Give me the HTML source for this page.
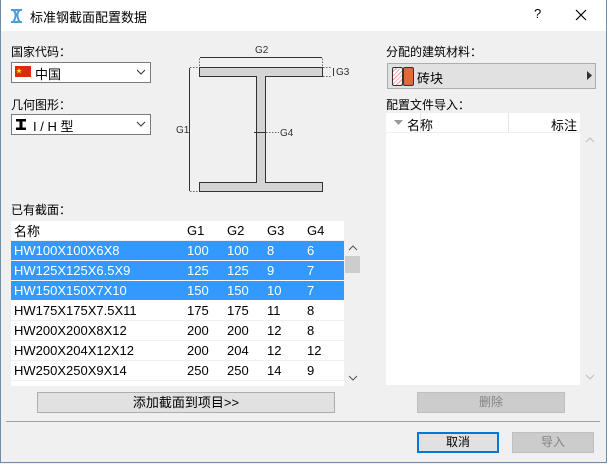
<!DOCTYPE html>
<html><head><meta charset="utf-8"><style>
body{margin:0;width:607px;height:464px;overflow:hidden;background:#f0f0f0;font-family:"Liberation Sans","Noto Sans CJK SC",sans-serif;font-size:12px;color:#000;position:relative}
.a{position:absolute}
.win{left:0;top:0;width:605px;height:462px;border:1px solid #6f8ca8;border-top:none}
.title{left:1px;top:0;width:605px;height:31px;background:#fff}
.dd{background:#fff;border:1px solid #7a7a7a;box-sizing:border-box;height:21px}
.btn{border:1px solid #adadad;background:#e1e1e1;box-sizing:border-box;text-align:center;line-height:19px}
table{border-collapse:collapse}
td{height:19px;padding:0 0 0 3px;font-size:13px;border-bottom:1px solid #f0f0f0;white-space:nowrap}
tr.s td{background:#3399ff;color:#fff;border-bottom:1px solid #fff}
</style></head><body>
<div class="a win"></div>
<div class="a title"></div>
<svg class="a" style="left:9px;top:8px" width="16" height="16"><path d="M2 2h11M2 14h11M4 2q3 2 2.5 6t-2.5 6M11 2q-3 2-2.5 6t2.5 6" stroke="#4a9fd8" stroke-width="2" fill="none"/></svg>
<div class="a" style="left:30px;top:7px;font-size:13px">标准钢截面配置数据</div>
<div class="a" style="left:534px;top:6px;font-size:13px">?</div>
<svg class="a" style="left:575px;top:9px" width="12" height="12"><path d="M1 1L11 11M11 1L1 11" stroke="#000" stroke-width="1.2"/></svg>

<div class="a" style="left:11px;top:43px">国家代码：</div>
<div class="a dd" style="left:11px;top:62px;width:140px"></div>
<div class="a" style="left:15px;top:66px;width:16px;height:11px;background:#de2910"></div>
<div class="a" style="left:16px;top:66px;color:#ff0;font-size:6px">★</div>
<div class="a" style="left:35px;top:64px;font-size:13px">中国</div>
<svg class="a" style="left:136px;top:69px" width="10" height="7"><path d="M1 1l4 4 4-4" stroke="#333" fill="none"/></svg>
<div class="a" style="left:11px;top:96px">几何图形：</div>
<div class="a dd" style="left:11px;top:114px;width:140px"></div>
<svg class="a" style="left:16px;top:119px" width="10" height="11"><path d="M0 0h10v2.5h-3.5v6h3.5v2.5h-10v-2.5h3.5v-6h-3.5z" fill="#000"/></svg>
<div class="a" style="left:33px;top:116px;font-size:13px">I / H 型</div>
<svg class="a" style="left:136px;top:121px" width="10" height="7"><path d="M1 1l4 4 4-4" stroke="#333" fill="none"/></svg>

<svg class="a" style="left:170px;top:40px" width="190" height="160">
<path d="M29.5 27.5H152.5V36.5H95.5V142.5H152.5V151.5H29.5V142.5H86.5V36.5H29.5Z" fill="#d4d4d4" stroke="#333"/>
<path d="M29.5 26V17M152.5 26V17M20 27.5h8M20 151.5h8M153 27.5h9M153 36.5h9M96 92.5h13" stroke="#666" stroke-dasharray="1.5 1.5" fill="none"/>
<path d="M30 17.5h122M19.5 28v123M163.5 28v8M84 92.5h11" stroke="#333" fill="none"/>
<text x="85" y="13" font-size="10" font-family="Liberation Sans" fill="#333">G2</text>
<text x="166" y="35" font-size="10" font-family="Liberation Sans" fill="#333">G3</text>
<text x="6" y="93" font-size="10" font-family="Liberation Sans" fill="#333">G1</text>
<text x="110" y="96" font-size="10" font-family="Liberation Sans" fill="#333">G4</text>
</svg>

<div class="a" style="left:11px;top:201px">已有截面：</div>
<div class="a" style="left:11px;top:221px;width:333px;height:165px;background:#fff;overflow:hidden">
<table style="width:333px">
<tr><td style="width:170px">名称</td><td style="width:37px">G1</td><td style="width:37px">G2</td><td style="width:37px">G3</td><td>G4</td></tr>
<tr class="s"><td>HW100X100X6X8</td><td>100</td><td>100</td><td>8</td><td>6</td></tr>
<tr class="s"><td>HW125X125X6.5X9</td><td>125</td><td>125</td><td>9</td><td>7</td></tr>
<tr class="s"><td>HW150X150X7X10</td><td>150</td><td>150</td><td>10</td><td>7</td></tr>
<tr><td>HW175X175X7.5X11</td><td>175</td><td>175</td><td>11</td><td>8</td></tr>
<tr><td>HW200X200X8X12</td><td>200</td><td>200</td><td>12</td><td>8</td></tr>
<tr><td>HW200X204X12X12</td><td>200</td><td>204</td><td>12</td><td>12</td></tr>
<tr><td>HW250X250X9X14</td><td>250</td><td>250</td><td>14</td><td>9</td></tr>
<tr><td>HW250X255X14X14</td><td>250</td><td>255</td><td>14</td><td>14</td></tr>
</table></div>
<div class="a" style="left:345px;top:256px;width:15px;height:17px;background:#cdcdcd"></div>
<svg class="a" style="left:348px;top:245px" width="10" height="7"><path d="M1 5l4-4 4 4" stroke="#555" fill="none"/></svg>
<svg class="a" style="left:348px;top:375px" width="10" height="7"><path d="M1 1l4 4 4-4" stroke="#555" fill="none"/></svg>
<div class="a btn" style="left:37px;top:392px;width:298px;height:21px;font-size:13px">添加截面到项目&gt;&gt;</div>
<div class="a" style="left:6px;top:421px;width:594px;height:1px;background:#a0a0a0"></div>

<div class="a" style="left:386px;top:43px">分配的建筑材料：</div>
<div class="a" style="left:387px;top:63px;width:209px;height:26px;background:#e1e1e1;border:1px solid #adadad;box-sizing:border-box"></div>
<div class="a" style="left:392px;top:67px;width:9px;height:17px;border:1px solid #333;border-radius:2px;background:repeating-linear-gradient(135deg,#fff 0 2px,#e99 2px 3px)"></div>
<div class="a" style="left:403px;top:67px;width:9px;height:17px;border:1px solid #333;border-radius:2px;background:#e06a3d"></div>
<div class="a" style="left:417px;top:68px;font-size:13px">砖块</div>
<svg class="a" style="left:587px;top:71px" width="6" height="9"><path d="M0 0l5 4.5-5 4.5z" fill="#333"/></svg>
<div class="a" style="left:386px;top:96px">配置文件导入：</div>
<div class="a" style="left:386px;top:113px;width:194px;height:272px;background:#fff"></div>
<div class="a" style="left:386px;top:113px;width:194px;height:19px;border-bottom:1px solid #eee"></div>
<div class="a" style="left:420px;top:113px;width:1px;height:19px;background:#e5e5e5"></div>
<div class="a" style="left:508px;top:113px;width:1px;height:19px;background:#e5e5e5"></div>
<svg class="a" style="left:394px;top:120px" width="10" height="6"><path d="M0 0h9l-4.5 5z" fill="#999"/></svg>
<div class="a" style="left:407px;top:115px;font-size:13px">名称</div>
<div class="a" style="left:551px;top:115px;font-size:13px">标注</div>
<svg class="a" style="left:585px;top:137px" width="10" height="7"><path d="M1 5l4-4 4 4" stroke="#bbb" fill="none"/></svg>
<svg class="a" style="left:585px;top:374px" width="10" height="7"><path d="M1 1l4 4 4-4" stroke="#bbb" fill="none"/></svg>
<div class="a btn" style="left:417px;top:392px;width:148px;height:21px;background:#cccccc;border-color:#bfbfbf;color:#838383">删除</div>
<div class="a btn" style="left:417px;top:432px;width:82px;height:21px;border:2px solid #0078d7;line-height:17px">取消</div>
<div class="a btn" style="left:512px;top:432px;width:82px;height:21px;background:#cccccc;border-color:#bfbfbf;color:#838383">导入</div>
</body></html>
